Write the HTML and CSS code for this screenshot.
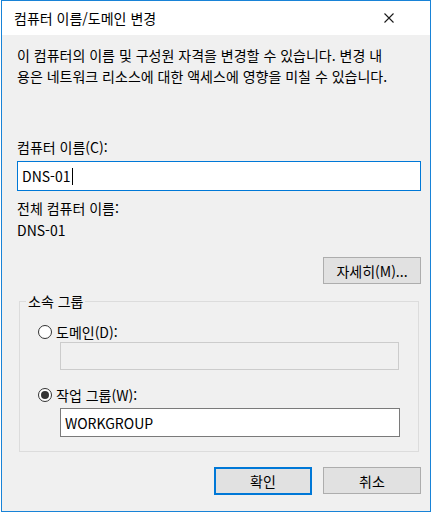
FILE: index.html
```html
<!DOCTYPE html>
<html lang="ko">

<head>
  <meta charset="UTF-8">
  <title>컴퓨터 이름/도메인 변경</title>
  <link rel="stylesheet" href="styles.css">
</head>

<body>
  <div class="window">
    <header class="titlebar">
      <span class="title">컴퓨터 이름/도메인 변경</span>
      <button type="button" class="close" aria-label="닫기">
        <svg width="10" height="10" viewBox="0 0 10 10">
          <path d="M0.5 0.5 L9.5 9.5 M9.5 0.5 L0.5 9.5" stroke="#1a1a1a" stroke-width="1.1" fill="none"/>
        </svg>
      </button>
    </header>

    <form class="dialog">
      <p class="intro">이 컴퓨터의 이름 및 구성원 자격을 변경할 수 있습니다. 변경 내<br>용은 네트워크 리소스에 대한 액세스에 영향을 미칠 수 있습니다.</p>

      <label class="field-label">컴퓨터 이름(C):</label>
      <div class="textbox focused">DNS-01<span class="caret"></span></div>

      <div class="full-name-label">전체 컴퓨터 이름:</div>
      <div class="full-name">DNS-01</div>

      <div class="more-row">
        <button type="button" class="btn">자세히(M)...</button>
      </div>

      <fieldset class="member-of">
        <legend>소속 그룹</legend>
        <div class="option domain">
          <span class="radio"></span>
          <span>도메인(D):</span>
        </div>
        <div class="textbox disabled"></div>
        <div class="option workgroup">
          <span class="radio checked"></span>
          <span>작업 그룹(W):</span>
        </div>
        <div class="textbox">WORKGROUP</div>
      </fieldset>

      <div class="actions">
        <button type="submit" class="btn default">확인</button>
        <button type="button" class="btn">취소</button>
      </div>
    </form>
  </div>
</body>

</html>
```

FILE: styles.css
```css
body {
  margin: 0;
  background: #ffffff;
  font-family: "Noto Sans CJK KR", "Noto Sans", sans-serif;
  font-size: 14px;
  color: #000;
}

.window {
  margin-left: 1px;
  width: 430px;
  height: 512px;
  box-sizing: border-box;
  border: 1px solid #1883d7;
  background: #f0f0f0;
  display: flex;
  flex-direction: column;
}

.titlebar {
  height: 34px;
  background: #fff;
  display: flex;
  align-items: center;
  justify-content: space-between;
  padding-left: 12px;
}

.title {
  line-height: 20px;
}

.close {
  width: 46px;
  height: 34px;
  border: 0;
  padding: 0;
  background: transparent;
  display: flex;
  align-items: center;
  justify-content: center;
  margin-right: 18px;
}

.dialog {
  display: flex;
  flex-direction: column;
  padding: 0 9px 0 15px;
  line-height: 20px;
}

.intro {
  margin: 10px 0 0;
  line-height: 21px;
}

.field-label {
  margin-top: 50px;
}

.textbox {
  height: 29px;
  box-sizing: border-box;
  border: 1px solid #7a7a7a;
  background: #fff;
  padding: 0 4px;
  display: flex;
  align-items: center;
  line-height: 20px;
}

.textbox.focused {
  height: 30px;
  margin-top: 4px;
  border-color: #0078d7;
}

.caret {
  width: 1px;
  height: 17px;
  background: #000;
  margin-left: 1px;
}

.full-name-label {
  margin-top: 7px;
}

.full-name {
  margin-top: 2px;
}

.more-row {
  display: flex;
  justify-content: flex-end;
  margin-top: 17px;
}

.btn {
  width: 98px;
  height: 27px;
  box-sizing: border-box;
  border: 1px solid #adadad;
  background: #e1e1e1;
  font: inherit;
  color: #000;
  padding: 0;
}

.btn.default {
  height: 28px;
  border: 2px solid #0078d7;
}

.member-of {
  margin: 7px 2px 0 2px;
  padding: 0 0 14px 0;
  border: 1px solid #dcdcdc;
  min-width: 0;
}

.member-of legend {
  margin-left: 6px;
  padding: 0 2px;
  line-height: 20px;
}

.option {
  display: flex;
  align-items: center;
  margin-left: 18px;
  gap: 4px;
}

.option.domain {
  margin-top: 11px;
}

.option.workgroup {
  margin-top: 15px;
}

.radio {
  width: 14px;
  height: 14px;
  box-sizing: border-box;
  border: 1px solid #333;
  border-radius: 50%;
  background: #fff;
  display: flex;
  align-items: center;
  justify-content: center;
}

.radio.checked::after {
  content: "";
  width: 8px;
  height: 8px;
  border-radius: 50%;
  background: #333;
}

.member-of .textbox {
  margin-left: 40px;
  width: 340px;
}

.member-of .textbox.disabled {
  width: 339px;
  height: 28px;
  border-color: #cccccc;
  background: #f0f0f0;
}

.workgroup + .textbox {
  margin-top: 3px;
}

.actions {
  display: flex;
  justify-content: flex-end;
  gap: 11px;
  margin-top: 15px;
}
```
